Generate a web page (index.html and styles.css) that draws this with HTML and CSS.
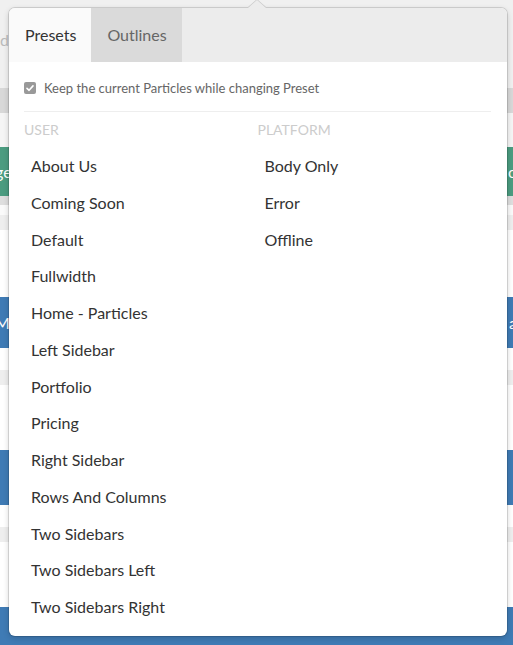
FILE: index.html
```html
<!DOCTYPE html>
<html>
<head>
<meta charset="utf-8">
<link rel="stylesheet" href="styles.css">
</head>
<body>
<div class="page">
  <div class="band b-top"><span class="rtxt gray">d</span></div>
  <div class="band b-gray"></div>
  <div class="band b-light"></div>
  <div class="band b-green"><span class="ltxt">ge</span><span class="rtxt">o</span></div>
  <div class="band b-gray2"></div>
  <div class="band b-white1"></div>
  <div class="band b-light2"></div>
  <div class="band b-white2"></div>
  <div class="band b-blue1"><span class="ltxt">M</span><span class="rtxt">a</span></div>
  <div class="band b-white3"></div>
  <div class="band b-light2"></div>
  <div class="band b-white4"></div>
  <div class="band b-blue2"></div>
  <div class="band b-white3"></div>
  <div class="band b-light2"></div>
  <div class="band b-white4"></div>
  <div class="band b-blue3"></div>
</div>

<div class="popover">
  <div class="arrow"></div>
  <div class="tabs">
    <div class="tab active">Presets</div>
    <div class="tab">Outlines</div>
  </div>
  <div class="panel">
    <label class="keep">
      <span class="check"><svg viewBox="0 0 12 12" width="12" height="12"><path d="M3 6.3 L5.1 8.3 L9 3.9" fill="none" stroke="#fff" stroke-width="1.6" stroke-linecap="round" stroke-linejoin="round"/></svg></span>
      <span>Keep the current Particles while changing Preset</span>
    </label>
    <div class="divider"></div>
    <div class="cols">
      <div class="col">
        <div class="head">User</div>
        <div class="item">About Us</div>
        <div class="item">Coming Soon</div>
        <div class="item">Default</div>
        <div class="item">Fullwidth</div>
        <div class="item">Home - Particles</div>
        <div class="item">Left Sidebar</div>
        <div class="item">Portfolio</div>
        <div class="item">Pricing</div>
        <div class="item">Right Sidebar</div>
        <div class="item">Rows And Columns</div>
        <div class="item">Two Sidebars</div>
        <div class="item">Two Sidebars Left</div>
        <div class="item">Two Sidebars Right</div>
      </div>
      <div class="col">
        <div class="head">Platform</div>
        <div class="item">Body Only</div>
        <div class="item">Error</div>
        <div class="item">Offline</div>
      </div>
    </div>
  </div>
</div>
</body>
</html>
```

FILE: styles.css
```css
* { box-sizing: border-box; }
html, body { margin: 0; padding: 0; }
body {
  width: 513px;
  height: 645px;
  overflow: hidden;
  position: relative;
  font-family: Lato, "Open Sans", sans-serif;
  background: #fff;
}

.page { display: flex; flex-direction: column; }
.band {
  display: flex;
  justify-content: space-between;
  align-items: center;
  overflow: hidden;
  font-size: 16px;
  color: #fff;
}
.ltxt { margin-left: -5px; }
.rtxt { margin-right: -4px; }
.gray { color: #bbb; }
.b-top { height: 88px; background: #f0f0f0; align-items: flex-start; padding-top: 30px; }
.b-gray { height: 25px; background: #d8d8d8; }
.b-light { height: 34px; background: #f5f5f5; }
.b-green { height: 49px; background: #4b9c80; }
.b-gray2 { height: 9px; background: #dedede; }
.b-white1 { height: 10px; background: #fafafa; }
.b-light2 { height: 15px; background: #eeeeee; }
.b-white2 { height: 67px; background: #ffffff; }
.b-blue1 { height: 51px; background: #3f7bb5; }
.b-white3 { height: 22px; background: #ffffff; }
.b-white4 { height: 65px; background: #ffffff; }
.b-blue2 { height: 55px; background: #3f7bb5; }
.b-blue3 { height: 60px; background: #3f7bb5; }

.popover {
  position: absolute;
  left: 9px;
  top: 8px;
  width: 498px;
  height: 628px;
  background: #fff;
  border-radius: 6px;
  box-shadow: 0 0 0 1px rgba(0,0,0,0.12), 0 2px 6px rgba(0,0,0,0.18);
}
.arrow {
  position: absolute;
  left: 239px;
  top: -8px;
  width: 0;
  height: 0;
  border-left: 9px solid transparent;
  border-right: 9px solid transparent;
  border-bottom: 8px solid #ececec;
  filter: drop-shadow(0 -1px 0 rgba(0,0,0,0.15));
}

.tabs {
  display: flex;
  height: 54px;
  background: #ececec;
  border-radius: 6px 6px 0 0;
  overflow: hidden;
}
.tab {
  padding: 0 15px 0 16px;
  line-height: 54px;
  font-size: 16px;
  color: #666;
  background: #dadada;
}
.tab.active {
  background: #fafafa;
  color: #333;
}

.panel { padding: 17.5px 16px 0 15px; }
.keep {
  display: flex;
  align-items: center;
  gap: 8px;
  height: 16px;
  font-size: 13px;
  color: #666;
}
.check {
  width: 12px;
  height: 12px;
  border-radius: 2px;
  background: #999;
  display: flex;
}
.divider {
  margin-top: 15px;
  border-top: 1px solid #eeeeee;
}
.cols {
  display: grid;
  grid-template-columns: 1fr 1fr;
  padding-top: 8.5px;
}
.head {
  font-size: 14px;
  line-height: 20px;
  text-transform: uppercase;
  color: #cccccc;
  margin-bottom: 8px;
}
.item {
  height: 36.75px;
  line-height: 36.75px;
  padding-left: 7px;
  font-size: 16px;
  color: #333;
}
```
